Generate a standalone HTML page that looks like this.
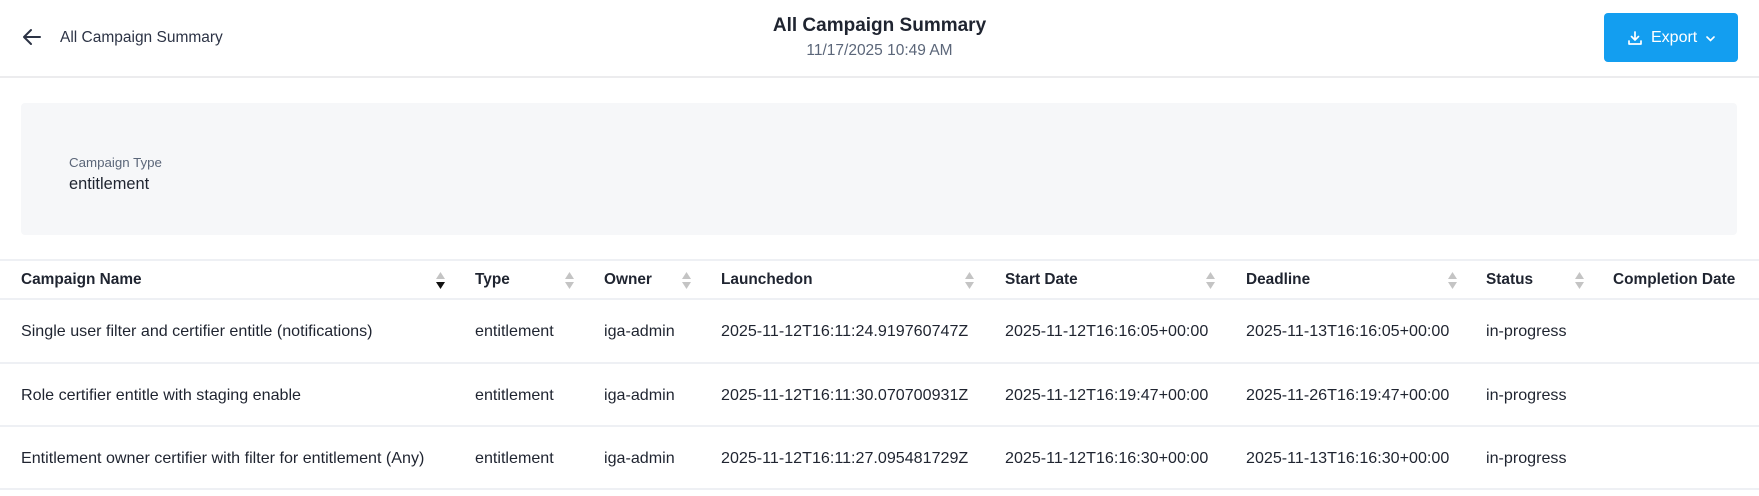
<!DOCTYPE html>
<html><head><meta charset="utf-8"><style>
*{box-sizing:border-box;margin:0;padding:0}
body{width:1759px;height:496px;overflow:hidden;background:#fff;font-family:"Liberation Sans",sans-serif;color:#1f2430;position:relative}
.abs{position:absolute;white-space:nowrap}
.hdr{position:absolute;left:0;top:0;width:1759px;height:78px;border-bottom:2px solid #ececee}
.btn{position:absolute;left:1604px;top:13px;width:134px;height:49px;background:#139ef0;border-radius:4px;color:#fff;font-size:16px}
.box{position:absolute;left:21px;top:103px;width:1716px;height:132px;background:#f6f7f9;border-radius:4px}
.line{position:absolute;left:0;width:1759px;height:2px;background:#eef0f4}
.th{position:absolute;font-weight:bold;font-size:15.4px;color:#1f2430;top:271px;white-space:nowrap}
.td{position:absolute;font-size:16.1px;color:#1f2430;white-space:nowrap}
.sort{position:absolute;top:271px;width:11px;height:19px}
</style></head><body>
<div class="hdr"></div>
<svg class="abs" style="left:22px;top:28px" width="20" height="18" viewBox="0 0 20 18"><path d="M18 9H3M9 2L2 9l7 7" fill="none" stroke="#2c3345" stroke-width="2" stroke-linecap="round" stroke-linejoin="round"/></svg>
<div class="abs" style="left:60px;top:29px;font-size:15.5px;color:#2c3345">All Campaign Summary</div>
<div class="abs" style="left:0;width:1759px;text-align:center;top:15px;font-size:19px;font-weight:bold;color:#1f2430">All Campaign Summary</div>
<div class="abs" style="left:0;width:1759px;text-align:center;top:42px;font-size:15.5px;color:#5b6679">11/17/2025 10:49 AM</div>
<div class="btn">
<svg class="abs" style="left:24px;top:18px" width="14" height="14" viewBox="0 0 14 14"><path d="M7 1v8M3.5 5.5L7 9l3.5-3.5M1 10v3h12v-3" fill="none" stroke="#fff" stroke-width="1.7" stroke-linecap="round" stroke-linejoin="round"/></svg>
<div class="abs" style="left:47px;top:16px">Export</div>
<svg class="abs" style="left:102px;top:23px" width="9" height="6" viewBox="0 0 9 6"><path d="M1 1l3.5 3.5L8 1" fill="none" stroke="#fff" stroke-width="1.6" stroke-linecap="round"/></svg>
</div>
<div class="box"></div>
<div class="abs" style="left:69px;top:155px;font-size:13.3px;color:#5b6679">Campaign Type</div>
<div class="abs" style="left:69px;top:175px;font-size:16.4px;color:#1f2430">entitlement</div>
<div class="line" style="top:259px"></div>
<div class="line" style="top:298px"></div>
<div class="line" style="top:362px"></div>
<div class="line" style="top:425px"></div>
<div class="line" style="top:488px"></div>
<div class="th" style="left:21px">Campaign Name</div>
<div class="th" style="left:475px">Type</div>
<div class="th" style="left:604px">Owner</div>
<div class="th" style="left:721px">Launchedon</div>
<div class="th" style="left:1005px">Start Date</div>
<div class="th" style="left:1246px">Deadline</div>
<div class="th" style="left:1486px">Status</div>
<div class="th" style="left:1613px">Completion Date</div>
<svg class="sort" style="left:435px" viewBox="0 0 11 19"><path d="M5.5 1L10 8H1z" fill="#c4c4c4"/><path d="M5.5 18L10 11H1z" fill="#111"/></svg>
<svg class="sort" style="left:564px" viewBox="0 0 11 19"><path d="M5.5 1L10 8H1z" fill="#c4c4c4"/><path d="M5.5 18L10 11H1z" fill="#c4c4c4"/></svg>
<svg class="sort" style="left:681px" viewBox="0 0 11 19"><path d="M5.5 1L10 8H1z" fill="#c4c4c4"/><path d="M5.5 18L10 11H1z" fill="#c4c4c4"/></svg>
<svg class="sort" style="left:964px" viewBox="0 0 11 19"><path d="M5.5 1L10 8H1z" fill="#c4c4c4"/><path d="M5.5 18L10 11H1z" fill="#c4c4c4"/></svg>
<svg class="sort" style="left:1205px" viewBox="0 0 11 19"><path d="M5.5 1L10 8H1z" fill="#c4c4c4"/><path d="M5.5 18L10 11H1z" fill="#c4c4c4"/></svg>
<svg class="sort" style="left:1447px" viewBox="0 0 11 19"><path d="M5.5 1L10 8H1z" fill="#c4c4c4"/><path d="M5.5 18L10 11H1z" fill="#c4c4c4"/></svg>
<svg class="sort" style="left:1574px" viewBox="0 0 11 19"><path d="M5.5 1L10 8H1z" fill="#c4c4c4"/><path d="M5.5 18L10 11H1z" fill="#c4c4c4"/></svg>

<div class="td" style="left:21px;top:322px">Single user filter and certifier entitle (notifications)</div>
<div class="td" style="left:475px;top:322px">entitlement</div>
<div class="td" style="left:604px;top:322px">iga-admin</div>
<div class="td" style="left:721px;top:322px">2025-11-12T16:11:24.919760747Z</div>
<div class="td" style="left:1005px;top:322px">2025-11-12T16:16:05+00:00</div>
<div class="td" style="left:1246px;top:322px">2025-11-13T16:16:05+00:00</div>
<div class="td" style="left:1486px;top:322px">in-progress</div>

<div class="td" style="left:21px;top:386px">Role certifier entitle with staging enable</div>
<div class="td" style="left:475px;top:386px">entitlement</div>
<div class="td" style="left:604px;top:386px">iga-admin</div>
<div class="td" style="left:721px;top:386px">2025-11-12T16:11:30.070700931Z</div>
<div class="td" style="left:1005px;top:386px">2025-11-12T16:19:47+00:00</div>
<div class="td" style="left:1246px;top:386px">2025-11-26T16:19:47+00:00</div>
<div class="td" style="left:1486px;top:386px">in-progress</div>

<div class="td" style="left:21px;top:449px">Entitlement owner certifier with filter for entitlement (Any)</div>
<div class="td" style="left:475px;top:449px">entitlement</div>
<div class="td" style="left:604px;top:449px">iga-admin</div>
<div class="td" style="left:721px;top:449px">2025-11-12T16:11:27.095481729Z</div>
<div class="td" style="left:1005px;top:449px">2025-11-12T16:16:30+00:00</div>
<div class="td" style="left:1246px;top:449px">2025-11-13T16:16:30+00:00</div>
<div class="td" style="left:1486px;top:449px">in-progress</div>
</body></html>
